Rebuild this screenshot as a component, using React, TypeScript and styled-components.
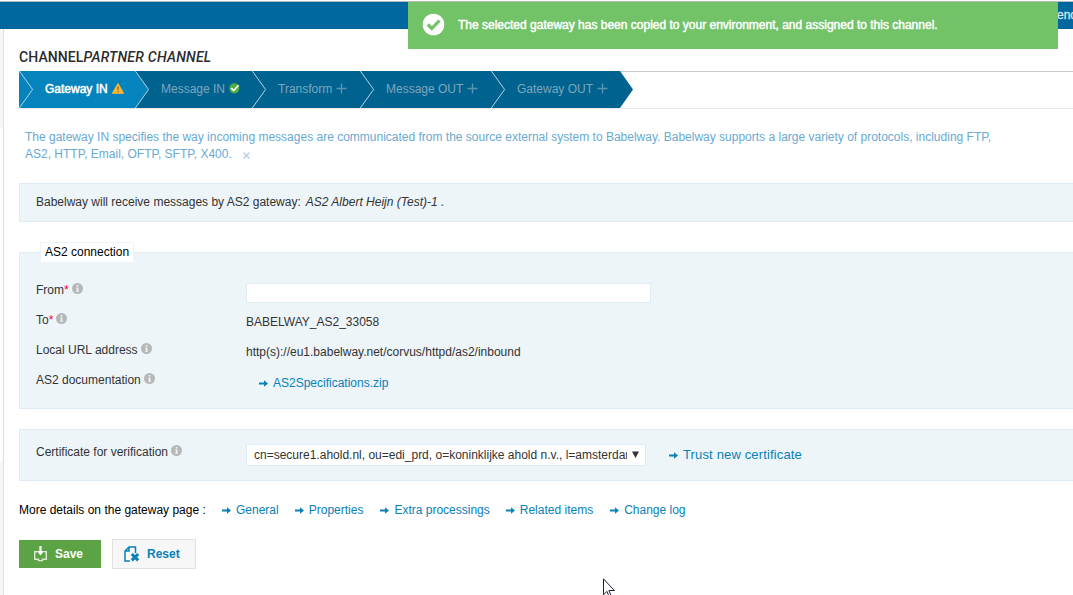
import React from "react";
import styled, { createGlobalStyle } from "styled-components";

const GlobalStyle = createGlobalStyle`
  *, *::before, *::after { box-sizing: border-box; }
  html, body { margin: 0; padding: 0; background: #fff; }
  body { font: 12px/16px "Liberation Sans", Arial, sans-serif; color: #333; overflow: hidden; }
`;

const Page = styled.div`
  position: relative;
  width: 1073px;
  height: 595px;
  overflow: hidden;
  display: flex;
  flex-direction: column;
  white-space: nowrap;
`;
const TopBar = styled.header`
  flex: none;
  height: 28px;
  margin-top: 1px;
  border-top: 1px solid #b9bcbe;
  background: #00689f;
  color: #d5e6f0;
  display: flex;
  justify-content: flex-end;
  line-height: 26px;
`;
const TopLink = styled.span`
  width: 16px;
  overflow: hidden;
  -webkit-text-stroke: 0.3px currentColor;
`;
const Toast = styled.div`
  position: absolute;
  left: 408px;
  top: 2px;
  width: 650px;
  height: 47px;
  background: #72c267;
  color: #fff;
  display: flex;
  align-items: center;
  padding: 0 0 2px 14px;
  gap: 13px;
  -webkit-text-stroke: 0.45px currentColor;
`;
const Body = styled.div`
  flex: 1;
  display: flex;
`;
const Rail = styled.aside`
  flex: none;
  width: 4px;
  border-right: 1px solid #dedede;
  display: flex;
  flex-direction: column;
  justify-content: space-between;
`;
const RailBlock = styled.div<{ $h: number }>`
  height: ${(p) => p.$h}px;
  background: #f7f7f7;
`;
const Main = styled.main`
  flex: 1;
  min-width: 0;
  padding: 20px 0 0 15px;
`;
const Title = styled.h1`
  margin: 0 0 6px;
  height: 16px;
  font: 500 14px/16px Roboto, "Liberation Sans", sans-serif;
  letter-spacing: 0.1px;
  color: #2b2b2b;
  em { letter-spacing: 0.25px; }
`;
const Wizard = styled.nav`
  display: flex;
  height: 38px;
  border-top: 1px solid #cbcbcb;
  border-bottom: 1px solid #e9e9e9;
`;
const Step = styled.div<{ $w: number; $active?: boolean }>`
  position: relative;
  width: ${(p) => p.$w}px;
  height: 37px;
  margin-top: -1px;
  padding: 0 0 1px 26px;
  display: flex;
  align-items: center;
  gap: 4px;
  background: ${(p) => (p.$active ? "#0483bc" : "#00628e")};
  color: ${(p) => (p.$active ? "#fff" : "#7fa6bf")};
  -webkit-text-stroke: ${(p) => (p.$active ? "0.5px currentColor" : "0")};
`;
const Notch = styled.svg`
  position: absolute;
  left: 0;
  top: 0;
`;
const StepIcon = styled.span`
  display: flex;
  margin-top: -1px;
`;
const Tail = styled.svg`
  margin-top: -1px;
`;
const Hint = styled.p`
  margin: 20px 0 0 6px;
  line-height: 17px;
  color: #69a9d1;
`;
const Dismiss = styled.svg`
  margin-left: 11px;
  vertical-align: -1px;
`;
const Panel = styled.section<{ $h: number; $gap: number }>`
  height: ${(p) => p.$h}px;
  margin-top: ${(p) => p.$gap}px;
  background: #edf5f9;
  border: 1px solid #dfecf4;
  border-right: 0;
  padding-left: 16px;
`;
const Summary = styled.p`
  margin: 10px 0 0;
  em { margin-left: 5px; }
`;
const Legend = styled.div`
  width: 94px;
  height: 20px;
  margin: -11px 0 0 4px;
  border: 1px solid #edf5f9;
  border-bottom: 0;
  background: #fff;
  color: #000;
  line-height: 19px;
  padding-left: 4px;
`;
const Fields = styled.div`
  padding-top: 17px;
`;
const Row = styled.div`
  display: flex;
  height: 30px;
`;
const Label = styled.label`
  width: 210px;
  height: 22px;
  display: flex;
  align-items: center;
`;
const Star = styled.span`
  color: #f03;
`;
const Info = styled.svg`
  margin: -3px 0 0 3px;
`;
const Value = styled.div`
  padding-top: 5px;
`;
const TextBox = styled.input`
  width: 405px;
  height: 20px;
  margin-top: 4px;
  border: 1px solid #dfecf4;
  background: #fff;
`;
const CertRow = styled.div`
  display: flex;
  padding-top: 11px;
`;
const SelectBox = styled.div`
  width: 400px;
  height: 22px;
  margin-top: 3px;
  border: 1px solid #dfecf4;
  background: #fff;
  display: flex;
  align-items: center;
  padding-left: 7px;
`;
const SelectText = styled.span`
  width: 373px;
  overflow: hidden;
`;
const Caret = styled.svg`
  margin: -1px 0 0 5px;
`;
const ArrowLink = styled.a<{ $size?: number; $spacing?: number; $ml?: number; $mt?: number }>`
  display: inline-flex;
  align-items: center;
  height: 16px;
  gap: 5px;
  color: #0880b8;
  font-size: ${(p) => p.$size ?? 12}px;
  letter-spacing: ${(p) => p.$spacing ?? 0}px;
  margin-left: ${(p) => p.$ml ?? 0}px;
  margin-top: ${(p) => p.$mt ?? 0}px;
`;
const More = styled.div`
  display: flex;
  margin-top: 21px;
  color: #000;
`;
const MoreLabel = styled.span`
  width: 203px;
`;
const Actions = styled.div`
  display: flex;
  align-items: center;
  gap: 11px;
  margin-top: 21px;
`;
const Button = styled.button<{ $primary?: boolean }>`
  width: ${(p) => (p.$primary ? 82 : 84)}px;
  height: ${(p) => (p.$primary ? 28 : 30)}px;
  padding: 0 0 0 ${(p) => (p.$primary ? 15 : 11)}px;
  display: flex;
  align-items: center;
  gap: ${(p) => (p.$primary ? 8 : 7)}px;
  border: ${(p) => (p.$primary ? "0" : "1px solid #e1e1e1")};
  background: ${(p) => (p.$primary ? "#5ba345" : "#f7f7f7")};
  color: ${(p) => (p.$primary ? "#fff" : "#0880b8")};
  font: 700 12px/16px "Liberation Sans", Arial, sans-serif;
`;
const Pointer = styled.svg`
  position: absolute;
  left: 603px;
  top: 578px;
`;

const InfoIcon = () => (
  <Info width="11" height="11" viewBox="0 0 11 11">
    <circle cx="5.5" cy="5.5" r="5.5" fill="#b7b7b7" />
    <path d="M4.8 2h1.6v1.4H4.8zM4.2 4.6h2.2v3.2h.6v1H4.1v-1h.7V5.6h-.6z" fill="#edf5f9" />
  </Info>
);
const Arrow = () => (
  <svg width="9" height="7" viewBox="0 0 9 7">
    <path d="M0 2.5h5V.3L9 3.5 5 6.7V4.5H0z" fill="#0880b8" />
  </svg>
);
const Plus = () => (
  <svg width="11" height="11" viewBox="0 0 11 11">
    <path d="M0 5h10M5 0v10" transform="translate(.5 .5)" stroke="#5c93b1" strokeWidth="1.4" />
  </svg>
);
const Warning = () => (
  <svg width="12" height="11" viewBox="0 0 12 11">
    <path d="M6 .5 11.6 10.3H.4z" fill="#fbb632" stroke="#fbb632" strokeLinejoin="round" />
    <path d="M5.4 3.4h1.2v3.8H5.4zM5.4 8h1.2v1.2H5.4z" fill="#7c6a3c" />
  </svg>
);
const Done = () => (
  <svg width="11" height="11" viewBox="0 0 11 11">
    <circle cx="5.3" cy="5.3" r="5.1" fill="#4fae3f" />
    <path d="M2.3 5.2 4.7 7.6 9.6 2.2" fill="none" stroke="#fff" strokeWidth="1.7" />
  </svg>
);
const StepNotch = ({ fill }: { fill: string }) => (
  <Notch width="15" height="37" viewBox="0 0 15 37">
    <path d="M0 0 13.6 18.5 0 37z" fill={fill} />
    <path d="M.3 0 13.6 18.5.3 37" fill="none" stroke="#b4d3e3" strokeWidth="1" />
  </Notch>
);

const steps = [
  { name: "Gateway IN", w: 116, icon: <Warning />, active: true },
  { name: "Message IN", w: 117, icon: <Done /> },
  { name: "Transform", w: 108, icon: <Plus /> },
  { name: "Message OUT", w: 131, icon: <Plus /> },
  { name: "Gateway OUT", w: 129, icon: <Plus /> },
];
const details = [
  { name: "General", ml: 0 },
  { name: "Properties", ml: 16 },
  { name: "Extra processings", ml: 17 },
  { name: "Related items", ml: 16 },
  { name: "Change log", ml: 17 },
];

export default function App() {
  return (
    <Page>
      <GlobalStyle />
      <TopBar>
        <TopLink>enc</TopLink>
      </TopBar>
      <Body>
        <Rail>
          <RailBlock $h={99} />
          <RailBlock $h={134} />
        </Rail>
        <Main>
          <Title>
            CHANNEL<em>PARTNER CHANNEL</em>
          </Title>
          <Wizard>
            {steps.map((s, i) => (
              <Step key={s.name} $w={s.w} $active={s.active}>
                <StepNotch fill={i < 2 ? "#0483bc" : "#00628e"} />
                {s.name}
                <StepIcon>{s.icon}</StepIcon>
              </Step>
            ))}
            <Tail width="13" height="37" viewBox="0 0 13 37">
              <path d="M0 0 13 18.5 0 37z" fill="#00628e" />
            </Tail>
          </Wizard>
          <Hint>
            The gateway IN specifies the way incoming messages are communicated from the source external system to
            Babelway. Babelway supports a large variety of protocols, including FTP,
            <br />
            AS2, HTTP, Email, OFTP, SFTP, X400.
            <Dismiss width="7" height="7" viewBox="0 0 7 7">
              <path d="m.6.6 5.8 5.8M6.4.6.6 6.4" stroke="#bcd6e8" strokeWidth="1.5" />
            </Dismiss>
          </Hint>
          <Panel $h={39} $gap={20}>
            <Summary>
              Babelway will receive messages by AS2 gateway:<em>AS2 Albert Heijn (Test)-1 .</em>
            </Summary>
          </Panel>
          <Panel $h={157} $gap={30}>
            <Legend>AS2 connection</Legend>
            <Fields>
              <Row>
                <Label>From<Star>*</Star><InfoIcon /></Label>
                <TextBox />
              </Row>
              <Row>
                <Label>To<Star>*</Star><InfoIcon /></Label>
                <Value>BABELWAY_AS2_33058</Value>
              </Row>
              <Row>
                <Label>Local URL address<InfoIcon /></Label>
                <Value>http(s)://eu1.babelway.net/corvus/httpd/as2/inbound</Value>
              </Row>
              <Row>
                <Label>AS2 documentation<InfoIcon /></Label>
                <ArrowLink $ml={13} $mt={6}><Arrow />AS2Specifications.zip</ArrowLink>
              </Row>
            </Fields>
          </Panel>
          <Panel $h={52} $gap={20}>
            <CertRow>
              <Label>Certificate for verification<InfoIcon /></Label>
              <SelectBox>
                <SelectText>cn=secure1.ahold.nl, ou=edi_prd, o=koninklijke ahold n.v., l=amsterdam</SelectText>
                <Caret width="7" height="7" viewBox="0 0 7 7"><path d="M0 .5h7L3.5 7z" fill="#333" /></Caret>
              </SelectBox>
              <ArrowLink $size={13} $spacing={0.15} $ml={23} $mt={6}><Arrow />Trust new certificate</ArrowLink>
            </CertRow>
          </Panel>
          <More>
            <MoreLabel>More details on the gateway page :</MoreLabel>
            {details.map((d) => (
              <ArrowLink key={d.name} $ml={d.ml}><Arrow />{d.name}</ArrowLink>
            ))}
          </More>
          <Actions>
            <Button $primary>
              <svg width="13" height="16" viewBox="0 0 13 16">
                <path d="M3 5.7H.7v7.6h3.8v1.3h4v-1.3h3.8V5.7H10" fill="none" stroke="#d9ebd3" strokeWidth="1.4" />
                <path d="M5.4 0h2.2v5h2.6L6.5 9.5 2.8 5h2.6z" fill="#fff" />
              </svg>
              Save
            </Button>
            <Button>
              <svg width="16" height="16" viewBox="0 0 16 16">
                <path d="M6 15H1V5l4-4h6.5v6M5 1v4H1" fill="none" stroke="#0880b8" strokeWidth="1.5" />
                <path d="m7.8 8 6.4 6.4M14.2 8l-6.4 6.4" stroke="#0880b8" strokeWidth="3" />
              </svg>
              Reset
            </Button>
          </Actions>
        </Main>
      </Body>
      <Toast>
        <svg width="23" height="23" viewBox="0 0 23 23">
          <circle cx="11.5" cy="11.5" r="10.8" fill="#fff" />
          <path d="m5.8 11.5 4 4 7.7-8" fill="none" stroke="#72c267" strokeWidth="3.2" />
        </svg>
        The selected gateway has been copied to your environment, and assigned to this channel.
      </Toast>
      <Pointer width="13" height="17" viewBox="0 0 13 17">
        <path d="M.5.8v16l3.4-3.4 2 4.6 2-1-2-4.5h5.4z" fill="#fff" stroke="#223" />
      </Pointer>
    </Page>
  );
}
